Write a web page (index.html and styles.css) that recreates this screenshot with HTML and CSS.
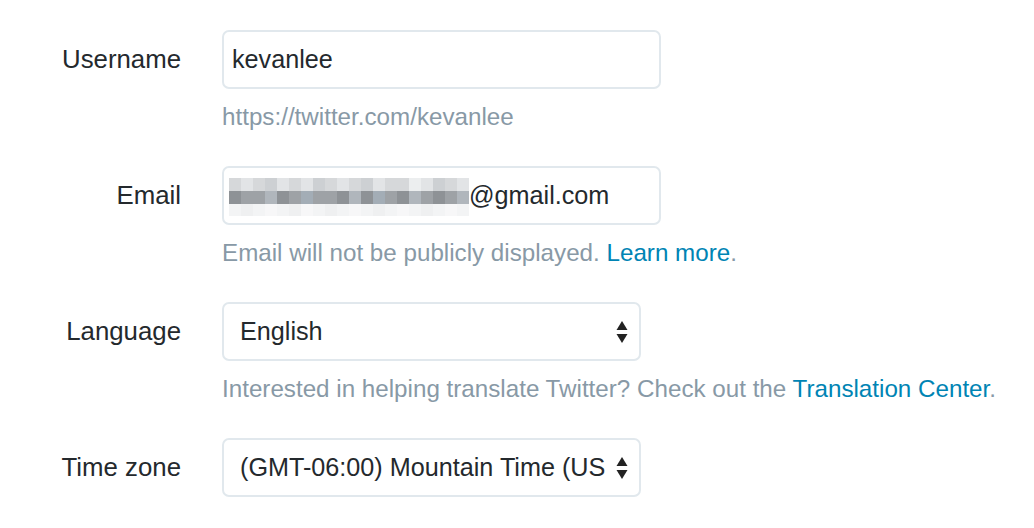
FILE: index.html
```html
<!DOCTYPE html>
<html>
<head>
<meta charset="utf-8">
<link rel="stylesheet" href="styles.css">
</head>
<body>
<div class="form">
  <div class="row">
    <label class="label">Username</label>
    <div class="field">
      <div class="input wide"><span class="value">kevanlee</span></div>
      <p class="help">https://twitter.com/kevanlee</p>
    </div>
  </div>
  <div class="row">
    <label class="label">Email</label>
    <div class="field">
      <div class="input wide email">
        <div class="blur">
          <i class="a"></i><i class="b"></i><i class="a"></i><i class="c"></i><i class="b"></i><i class="a"></i><i class="b"></i><i class="c"></i><i class="a"></i><i class="b"></i><i class="a"></i><i class="c"></i><i class="b"></i><i class="a"></i><i class="a"></i><i class="e"></i><i class="b"></i><i class="c"></i><i class="a"></i><i class="b"></i>
          <i class="d"></i><i class="f"></i><i class="f"></i><i class="g"></i><i class="d"></i><i class="f"></i><i class="h"></i><i class="f"></i><i class="f"></i><i class="d"></i><i class="g"></i><i class="d"></i><i class="h"></i><i class="f"></i><i class="d"></i><i class="g"></i><i class="f"></i><i class="d"></i><i class="f"></i><i class="g"></i>
          <i class="l"></i><i class="m"></i><i class="l"></i><i class="n"></i><i class="l"></i><i class="m"></i><i class="n"></i><i class="l"></i><i class="m"></i><i class="l"></i><i class="n"></i><i class="l"></i><i class="m"></i><i class="l"></i><i class="n"></i><i class="l"></i><i class="m"></i><i class="l"></i><i class="n"></i><i class="l"></i>
        </div>
        <span class="value">@gmail.com</span>
      </div>
      <p class="help">Email will not be publicly displayed. <a href="#">Learn more</a>.</p>
    </div>
  </div>
  <div class="row">
    <label class="label">Language</label>
    <div class="field">
      <div class="input select"><span class="sel-value">English</span>
        <svg class="arrows" width="12" height="22" viewBox="0 0 12 22"><path d="M6 0 L11.5 9 L0.5 9 Z" fill="#222"/><path d="M0.5 13 L11.5 13 L6 22 Z" fill="#222"/></svg>
      </div>
      <p class="help">Interested in helping translate Twitter? Check out the <a href="#">Translation Center</a>.</p>
    </div>
  </div>
  <div class="row">
    <label class="label">Time zone</label>
    <div class="field">
      <div class="input select"><span class="sel-value">(GMT-06:00) Mountain Time (US</span>
        <svg class="arrows" width="12" height="22" viewBox="0 0 12 22"><path d="M6 0 L11.5 9 L0.5 9 Z" fill="#222"/><path d="M0.5 13 L11.5 13 L6 22 Z" fill="#222"/></svg>
      </div>
    </div>
  </div>
</div>
</body>
</html>
```

FILE: styles.css
```css
html, body {
  margin: 0;
  padding: 0;
  background: #fff;
}
body {
  font-family: "Liberation Sans", Arial, Helvetica, sans-serif;
  color: #292f33;
}
.form {
  padding-top: 30px;
}
.row {
  display: grid;
  grid-template-columns: 181px auto;
  column-gap: 41px;
  margin-bottom: 35px;
}
.label {
  text-align: right;
  font-size: 25.8px;
  line-height: 59px;
  height: 59px;
  color: #24292d;
}
.field {
  display: flex;
  flex-direction: column;
}
.input {
  box-sizing: border-box;
  height: 59px;
  border: 2px solid #e1e8ed;
  border-radius: 7px;
  display: flex;
  align-items: center;
  font-size: 25.2px;
  color: #24292d;
  background: #fff;
}
.wide {
  width: 439px;
  padding-left: 8px;
}
.email {
  padding-left: 5px;
}
.select {
  width: 419px;
  padding-left: 16px;
  padding-right: 9px;
}
.sel-value {
  flex: 1;
  white-space: nowrap;
  padding-right: 8px;
}
.arrows {
  flex: none;
  margin-right: 2px;
}
.help {
  margin: 14px 0 0 0;
  font-size: 24.2px;
  line-height: 28px;
  height: 28px;
  color: #8899a6;
  white-space: nowrap;
}
.help a {
  color: #0084b4;
  text-decoration: none;
}
.blur {
  display: grid;
  grid-template-columns: repeat(20, 12px);
  grid-template-rows: 13px 13px 12px;
  width: 240px;
  margin-top: 2px;
}
.blur i { display: block; }
.blur .a { background: #d6d8da; }
.blur .b { background: #e2e4e6; }
.blur .c { background: #cdd0d3; }
.blur .e { background: #eceeef; }
.blur .d { background: #8e9296; }
.blur .f { background: #9ea2a6; }
.blur .g { background: #b0b6bc; }
.blur .h { background: #a3adb6; }
.blur .l { background: #f3f4f5; }
.blur .m { background: #eff0f1; }
.blur .n { background: #f7f7f8; }
```
